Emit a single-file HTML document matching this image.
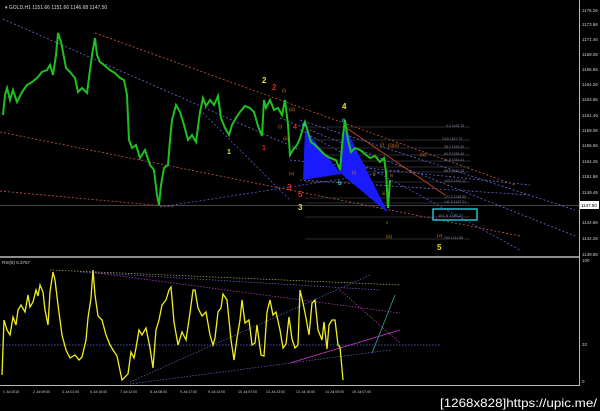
<!DOCTYPE html>
<html><head><style>
html,body{margin:0;padding:0;background:#000;width:600px;height:411px;overflow:hidden}
svg{display:block}
text{font-family:"Liberation Sans",sans-serif}
</style></head><body>
<svg width="600" height="411" viewBox="0 0 600 411">
<rect width="600" height="411" fill="#000"/>
<line x1="579.5" y1="0" x2="579.5" y2="386" stroke="#bbb" stroke-width="1"/>
<line x1="0" y1="257" x2="579" y2="257" stroke="#bbb" stroke-width="1.5"/>
<line x1="0" y1="385.5" x2="579" y2="385.5" stroke="#bbb" stroke-width="1"/>
<line x1="0" y1="205.5" x2="579" y2="205.5" stroke="#888" stroke-width="0.6"/>
<g fill="#ccc" font-size="4.5">
<text x="582" y="12">1176.26</text><text x="582" y="26">1173.86</text><text x="582" y="41">1171.46</text>
<text x="582" y="56">1169.06</text><text x="582" y="71">1166.66</text><text x="582" y="86">1164.26</text>
<text x="582" y="101">1163.86</text><text x="582" y="117">1161.46</text><text x="582" y="132">1159.06</text>
<text x="582" y="147">1156.66</text><text x="582" y="163">1154.26</text><text x="582" y="178">1151.86</text>
<text x="582" y="194">1149.46</text><text x="582" y="224">1144.66</text><text x="582" y="240">1142.26</text>
<text x="582" y="256">1139.86</text><text x="582" y="262">100</text><text x="582" y="346">32</text><text x="582" y="383">0</text>
</g>
<rect x="580" y="201" width="19" height="8" fill="#fff"/><text x="581" y="207" font-size="4.5" fill="#000">1147.50</text>
<text x="5" y="9" font-size="5" fill="#ddd">▾ GOLD,H1  1151.66 1151.66 1146.68 1147.50</text>
<g fill="none" stroke-dasharray="2,2" stroke-width="0.8">
<line x1="3" y1="19" x2="300" y2="150" stroke="#6a6ad8"/>
<line x1="95" y1="33" x2="515" y2="185" stroke="#d05a3a"/>
<line x1="0" y1="191" x2="175" y2="207" stroke="#d05a3a"/>
<line x1="300" y1="130" x2="520" y2="250" stroke="#5a5ad0"/>
<line x1="200" y1="110" x2="290" y2="200" stroke="#5a5ad0"/>
<line x1="160" y1="207" x2="400" y2="170" stroke="#5a5ad0"/>
<line x1="0" y1="132" x2="520" y2="236" stroke="#d05a3a"/>
<line x1="280" y1="118" x2="575" y2="236" stroke="#6a6ad8"/>
<line x1="300" y1="120" x2="575" y2="210" stroke="#6a6ad8"/>
<line x1="290" y1="160" x2="530" y2="185" stroke="#6a6ad8"/>
<line x1="300" y1="180" x2="530" y2="195" stroke="#6a6ad8"/>
</g>
<line x1="345" y1="127" x2="445" y2="195" stroke="#c04020" stroke-width="1"/>
<g stroke="#556" stroke-width="0.6">
<line x1="305" y1="127" x2="470" y2="127"/><line x1="305" y1="140" x2="470" y2="140"/>
<line x1="305" y1="148" x2="470" y2="148"/><line x1="305" y1="155" x2="470" y2="155"/>
<line x1="305" y1="161" x2="470" y2="161"/><line x1="305" y1="167" x2="470" y2="167"/>
<line x1="305" y1="172" x2="470" y2="172"/><line x1="305" y1="182" x2="470" y2="182"/>
<line x1="305" y1="198" x2="470" y2="198"/><line x1="305" y1="203" x2="470" y2="203"/>
<line x1="305" y1="217" x2="470" y2="217"/><line x1="305" y1="239" x2="470" y2="239"/>
</g>
<g fill="#889" font-size="3.5">
<text x="446" y="127">0.0 1163.75</text><text x="442" y="140">23.6 1157.73</text><text x="444" y="148">38.2 1155.40</text>
<text x="444" y="155">50.0 1155.40</text><text x="444" y="161">61.8 1154.41</text><text x="444" y="172">88.6 1152.28</text>
<text x="444" y="182">100.0 1151.11</text><text x="444" y="198">127.2 1148.59</text><text x="444" y="203">141.4 1147.21</text>
<text x="444" y="239">200 1141.86</text>
</g>
<rect x="433" y="209" width="44" height="11" fill="none" stroke="#20c0d0" stroke-width="1.5"/>
<text x="438" y="217" font-size="4" fill="#889">161.8 1146.37</text>
<polygon points="303,180 305,129 341,174" fill="#1a1aff"/>
<polygon points="345,127 339,172 388,213" fill="#1a1aff"/>
<polyline fill="none" stroke="#1fc01f" stroke-width="2" points="3,115 5,95 7,88 10,100 13,90 17,102 22,92 27,85 32,82 37,78 42,72 47,70 50,65 53,75 56,55 58,33 61,42 63,52 66,68 70,72 75,78 78,92 82,88 87,93 92,55 95,38 97,55 100,62 104,65 110,70 115,73 120,78 124,80 127,95 129,140 132,148 136,145 140,158 145,150 150,165 154,170 157,195 159,205 161,185 164,168 168,165 170,140 172,120 176,105 180,112 184,125 188,140 192,135 196,142 200,112 203,98 206,106 210,100 214,105 218,96 221,118 225,128 229,135 232,125 236,118 240,112 245,106 250,108 254,112 258,126 262,136 264,100 266,108 270,100 274,110 278,108 282,115 285,100 288,125 290,155 293,150 297,145 300,138 303,128 305,122 308,132 311,142 315,145 320,150 325,155 330,158 336,160 340,170 343,135 345,120 348,140 351,152 355,148 360,150 365,154 370,158 375,156 380,162 384,158 386,172 388,208 390,180"/>
<g font-size="8" font-weight="bold">
<text x="262" y="83" fill="#e8e020">2</text><text x="272" y="90" fill="#e82020">2</text>
<text x="227" y="154" fill="#e8e020" font-size="7">1</text><text x="262" y="150" fill="#e82020" font-size="7">1</text>
<text x="293" y="129" fill="#e82020" font-size="7">4</text><text x="287" y="190" fill="#e82020">3</text>
<text x="298" y="197" fill="#e82020">5</text><text x="298" y="210" fill="#e8e020">3</text>
<text x="342" y="109" fill="#e8e020">4</text><text x="437" y="250" fill="#e8e020">5</text>
<text x="302" y="126" fill="#30c8d8" font-size="6">a</text><text x="342" y="122" fill="#30c8d8" font-size="6">c</text>
<text x="338" y="185" fill="#30c8d8" font-size="6">b</text>
</g>
<g font-size="4.5" fill="#d08020">
<text x="282" y="92">(i)</text><text x="289" y="111">(iii)</text><text x="278" y="128">(i)</text><text x="283" y="140">(iii)</text>
<text x="289" y="175">(v)</text><text x="380" y="146">(i)</text><text x="388" y="147">(ii)(iii)</text>
<text x="420" y="156">(iv)</text><text x="386" y="238">(iii)</text><text x="437" y="237">(v)</text>
<text x="352" y="174">(i)</text><text x="373" y="176">b</text><text x="390" y="177">iv</text>
<text x="382" y="195">iii</text><text x="386" y="224">v</text>
</g>
<text x="2" y="264" font-size="4.5" fill="#ccc">RSI(8) 6.3767</text>
<g fill="none" stroke-dasharray="1.5,1.5" stroke-width="0.7">
<line x1="0" y1="345" x2="440" y2="345" stroke="#6a6ad8"/>
<line x1="50" y1="270" x2="400" y2="285" stroke="#b0b050"/>
<line x1="80" y1="272" x2="380" y2="290" stroke="#6a6ad8"/>
<line x1="90" y1="272" x2="400" y2="313" stroke="#c040c0"/>
<line x1="130" y1="382" x2="370" y2="275" stroke="#5a6ad0"/>
<line x1="130" y1="384" x2="390" y2="350" stroke="#5a6ad0"/>
<line x1="340" y1="290" x2="400" y2="343" stroke="#c040c0"/>
</g>
<line x1="290" y1="363" x2="400" y2="330" stroke="#d030d0" stroke-width="0.8"/>
<line x1="372" y1="353" x2="395" y2="295" stroke="#40a0a0" stroke-width="0.8"/>
<polyline fill="none" stroke="#f0f020" stroke-width="1.3" points="2,375 4,320 7,330 10,335 13,317 16,325 18,310 21,305 25,312 28,295 30,307 33,302 36,290 38,296 40,285 43,292 45,310 48,325 50,292 53,272 55,280 58,305 62,335 66,350 70,358 75,355 79,360 82,357 86,340 88,318 91,298 93,270 95,295 98,316 102,320 106,335 110,345 113,350 117,356 122,380 128,374 131,352 134,358 136,348 139,330 142,335 146,328 150,348 153,368 156,330 159,320 162,305 166,300 169,290 171,287 174,322 178,345 182,332 186,340 190,313 193,290 195,290 198,308 202,316 206,312 210,335 213,345 215,338 218,312 221,308 223,294 227,300 231,340 234,360 237,338 240,320 242,300 245,323 249,320 252,345 255,343 257,325 261,355 264,356 267,312 270,300 273,315 276,312 280,330 283,348 286,344 289,317 292,339 295,348 298,345 300,290 303,303 306,318 309,335 312,303 315,300 318,330 322,340 324,322 327,349 329,325 332,320 335,320 338,345 340,347 343,380"/>
<g fill="#ccc" font-size="3.5">
<text x="3" y="393">1 Jul 2015</text><text x="33" y="393">2 Jul 09:00</text><text x="62" y="393">3 Jul 01:00</text>
<text x="90" y="393">6 Jul 15:00</text><text x="120" y="393">7 Jul 12:00</text><text x="150" y="393">8 Jul 08:00</text>
<text x="180" y="393">9 Jul 17:00</text><text x="208" y="393">9 Jul 14:00</text><text x="238" y="393">10 Jul 07:00</text>
<text x="266" y="393">13 Jul 23:00</text><text x="296" y="393">13 Jul 16:00</text><text x="325" y="393">14 Jul 09:00</text>
<text x="352" y="393">15 Jul 07:00</text>
</g>
<text x="440" y="407" font-size="12" fill="#fff" font-family="Liberation Mono,monospace" textLength="157" lengthAdjust="spacingAndGlyphs">[1268x828]https://upic.me/</text>
</svg>
</body></html>
